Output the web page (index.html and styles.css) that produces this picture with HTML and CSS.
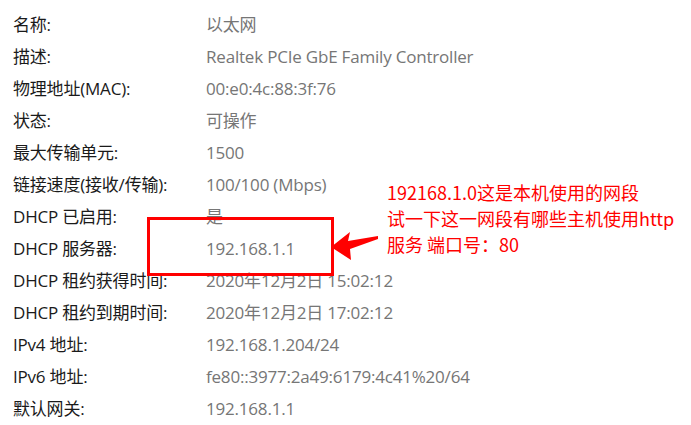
FILE: index.html
```html
<!DOCTYPE html>
<html lang="zh-CN">
<head>
<meta charset="utf-8">
<link rel="stylesheet" href="styles.css">
</head>
<body>
<div class="page">
  <dl class="props">
    <dt>名称:</dt><dd>以太网</dd>
    <dt>描述:</dt><dd>Realtek PCIe GbE Family Controller</dd>
    <dt>物理地址(MAC):</dt><dd>00:e0:4c:88:3f:76</dd>
    <dt>状态:</dt><dd>可操作</dd>
    <dt>最大传输单元:</dt><dd>1500</dd>
    <dt>链接速度(接收/传输):</dt><dd>100/100 (Mbps)</dd>
    <dt>DHCP 已启用:</dt><dd>是</dd>
    <dt>DHCP 服务器:</dt><dd>192.168.1.1</dd>
    <dt>DHCP 租约获得时间:</dt><dd>2020年12月2日 15:02:12</dd>
    <dt>DHCP 租约到期时间:</dt><dd>2020年12月2日 17:02:12</dd>
    <dt>IPv4 地址:</dt><dd>192.168.1.204/24</dd>
    <dt>IPv6 地址:</dt><dd>fe80::3977:2a49:6179:4c41%20/64</dd>
    <dt>默认网关:</dt><dd>192.168.1.1</dd>
  </dl>

  <div class="mark-box"></div>
  <svg class="mark-arrow" width="60" height="40" viewBox="0 0 60 40">
    <polygon points="1,27 20,12 18,21 48,16 48,19 20,29 21,40" fill="#ff0000"/>
  </svg>
  <div class="note">
    <div>192168.1.0这是本机使用的网段</div>
    <div>试一下这一网段有哪些主机使用http</div>
    <div>服务 端口号：80</div>
  </div>
</div>
</body>
</html>
```

FILE: styles.css
```css
html, body {
  margin: 0;
  padding: 0;
  background: #ffffff;
}

.page {
  position: relative;
  width: 691px;
  height: 425px;
  overflow: hidden;
  font-family: "Open Sans", "Noto Sans CJK SC", sans-serif;
  font-size: 17px;
  letter-spacing: -0.2px;
}

.props {
  display: grid;
  grid-template-columns: 193px 1fr;
  grid-auto-rows: 32px;
  margin: 0;
  padding: 9px 0 0 13px;
}

.props dt,
.props dd {
  margin: 0;
  line-height: 32px;
  white-space: nowrap;
}

.props dt {
  color: #1a1a1a;
}

.props dd {
  color: #767676;
}

.mark-box {
  position: absolute;
  left: 147px;
  top: 217px;
  width: 181px;
  height: 53px;
  border: 3px solid #ff0000;
}

.mark-arrow {
  position: absolute;
  left: 330px;
  top: 220px;
}

.note {
  position: absolute;
  left: 387px;
  top: 179px;
  color: #ff0000;
  font-family: "Noto Sans CJK SC", sans-serif;
  font-size: 18px;
  letter-spacing: 0;
  line-height: 26px;
  white-space: nowrap;
}
```
